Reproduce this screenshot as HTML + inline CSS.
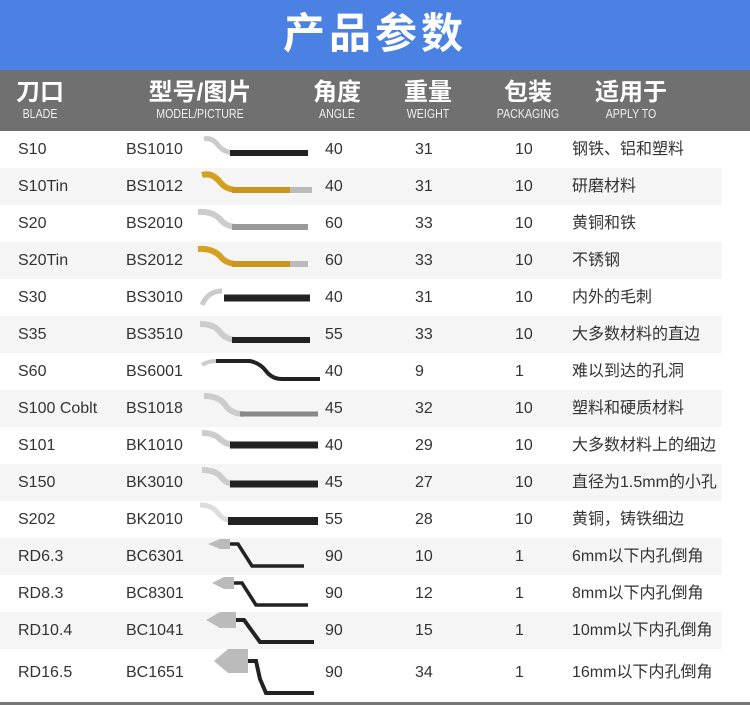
<!DOCTYPE html>
<html><head><meta charset="utf-8"><style>
*{margin:0;padding:0;box-sizing:border-box}
body{width:750px;height:705px;background:#fff;position:relative;overflow:hidden;font-family:"Liberation Sans","Noto Sans CJK SC",sans-serif;color:#333}
.top{position:absolute;left:0;top:0;width:750px;height:70px;background:#4a81e2;color:#fff;font-size:42px;font-weight:bold;text-align:center;line-height:68px;letter-spacing:4px}
.hd{position:absolute;left:0;top:70px;width:750px;height:61px;background:#707070;color:#fff}
.hd div{position:absolute;top:9px;text-align:center}
.hd b{display:block;font-size:24px;font-weight:bold;line-height:28px}
.hd i{display:block;font-style:normal;font-size:12.5px;line-height:14px;transform:scaleX(.85);color:#eee}
.r{position:absolute;left:0;width:722px;height:37px;font-size:16px}
.r.g{background:#f5f5f5}
.r span{position:absolute;top:0;height:37px;line-height:37px;white-space:nowrap}
.r svg{position:absolute;left:190px;top:0}
.bl{position:absolute;left:0;top:702px;width:750px;height:3px;background:#777}
</style></head><body>
<div class="top">产品参数</div>
<div class="hd">
<div style="left:10px;width:60px"><b>刀口</b><i>BLADE</i></div>
<div style="left:136px;width:128px"><b>型号/图片</b><i>MODEL/PICTURE</i></div>
<div style="left:304px;width:66px"><b>角度</b><i>ANGLE</i></div>
<div style="left:394px;width:68px"><b>重量</b><i>WEIGHT</i></div>
<div style="left:488px;width:80px"><b>包装</b><i>PACKAGING</i></div>
<div style="left:592px;width:78px"><b>适用于</b><i>APPLY TO</i></div>
</div>

<div class="r" style="top:131px"><span style="left:18px">S10</span><span style="left:126px">BS1010</span>
<svg width="130" height="37"><path d="M14,8 Q22,6 28,14 Q34,22 46,22" fill="none" stroke="#ccc" stroke-width="5"/><path d="M40,22 L118,22" stroke="#222" stroke-width="6"/></svg>
<span style="left:325px">40</span><span style="left:415px">31</span><span style="left:515px">10</span><span style="left:572px">钢铁、铝和塑料</span></div>

<div class="r g" style="top:168px"><span style="left:18px">S10Tin</span><span style="left:126px">BS1012</span>
<svg width="130" height="37"><path d="M12,7 Q22,4 30,14 Q36,22 48,22" fill="none" stroke="#d4a020" stroke-width="6"/><path d="M42,22 L100,22" stroke="#c8961a" stroke-width="6"/><path d="M100,22 L122,22" stroke="#bbb" stroke-width="6"/></svg>
<span style="left:325px">40</span><span style="left:415px">31</span><span style="left:515px">10</span><span style="left:572px">研磨材料</span></div>

<div class="r" style="top:205px"><span style="left:18px">S20</span><span style="left:126px">BS2010</span>
<svg width="130" height="37"><path d="M8,7 Q22,6 30,14 Q36,22 48,22" fill="none" stroke="#ccc" stroke-width="6"/><path d="M42,22 L118,22" stroke="#999" stroke-width="6"/></svg>
<span style="left:325px">60</span><span style="left:415px">33</span><span style="left:515px">10</span><span style="left:572px">黄铜和铁</span></div>

<div class="r g" style="top:242px"><span style="left:18px">S20Tin</span><span style="left:126px">BS2012</span>
<svg width="130" height="37"><path d="M8,7 Q22,6 30,14 Q36,22 48,22" fill="none" stroke="#d4a020" stroke-width="6"/><path d="M42,22 L100,22" stroke="#c8961a" stroke-width="6"/><path d="M100,22 L118,22" stroke="#bbb" stroke-width="6"/></svg>
<span style="left:325px">60</span><span style="left:415px">33</span><span style="left:515px">10</span><span style="left:572px">不锈钢</span></div>

<div class="r" style="top:279px"><span style="left:18px">S30</span><span style="left:126px">BS3010</span>
<svg width="130" height="37"><path d="M12,26 Q18,12 32,12" fill="none" stroke="#ccc" stroke-width="5"/><path d="M34,19 L120,19" stroke="#222" stroke-width="7"/></svg>
<span style="left:325px">40</span><span style="left:415px">31</span><span style="left:515px">10</span><span style="left:572px">内外的毛刺</span></div>

<div class="r g" style="top:316px"><span style="left:18px">S35</span><span style="left:126px">BS3510</span>
<svg width="130" height="37"><path d="M10,8 Q24,8 30,16 Q36,24 48,24" fill="none" stroke="#ccc" stroke-width="6"/><path d="M42,24 L120,24" stroke="#222" stroke-width="6"/></svg>
<span style="left:325px">55</span><span style="left:415px">33</span><span style="left:515px">10</span><span style="left:572px">大多数材料的直边</span></div>

<div class="r" style="top:353px"><span style="left:18px">S60</span><span style="left:126px">BS6001</span>
<svg width="130" height="37"><path d="M12,12 Q18,8 26,8" fill="none" stroke="#ccc" stroke-width="4"/><path d="M26,8 L60,8 Q70,10 76,18 Q82,26 92,26 L130,26" fill="none" stroke="#222" stroke-width="4"/></svg>
<span style="left:325px">40</span><span style="left:415px">9</span><span style="left:515px">1</span><span style="left:572px">难以到达的孔洞</span></div>

<div class="r g" style="top:390px"><span style="left:18px">S100 Coblt</span><span style="left:126px">BS1018</span>
<svg width="130" height="37"><path d="M14,6 Q30,6 36,16 Q42,24 54,24" fill="none" stroke="#ccc" stroke-width="6"/><path d="M50,24 L128,24" stroke="#888" stroke-width="5"/></svg>
<span style="left:325px">45</span><span style="left:415px">32</span><span style="left:515px">10</span><span style="left:572px">塑料和硬质材料</span></div>

<div class="r" style="top:427px"><span style="left:18px">S101</span><span style="left:126px">BK1010</span>
<svg width="130" height="37"><path d="M12,6 Q24,6 30,12 Q36,18 46,18" fill="none" stroke="#ccc" stroke-width="6"/><path d="M40,18 L128,18" stroke="#222" stroke-width="7"/></svg>
<span style="left:325px">40</span><span style="left:415px">29</span><span style="left:515px">10</span><span style="left:572px">大多数材料上的细边</span></div>

<div class="r g" style="top:464px"><span style="left:18px">S150</span><span style="left:126px">BK3010</span>
<svg width="130" height="37"><path d="M12,6 Q26,6 32,14 Q36,20 46,20" fill="none" stroke="#ccc" stroke-width="6"/><path d="M40,20 L128,20" stroke="#222" stroke-width="7"/></svg>
<span style="left:325px">45</span><span style="left:415px">27</span><span style="left:515px">10</span><span style="left:572px">直径为1.5mm的小孔</span></div>

<div class="r" style="top:501px"><span style="left:18px">S202</span><span style="left:126px">BK2010</span>
<svg width="130" height="37"><path d="M10,4 Q22,4 28,12 Q34,20 44,20" fill="none" stroke="#ddd" stroke-width="5"/><path d="M38,20 L128,20" stroke="#222" stroke-width="8"/></svg>
<span style="left:325px">55</span><span style="left:415px">28</span><span style="left:515px">10</span><span style="left:572px">黄铜，铸铁细边</span></div>

<div class="r g" style="top:538px"><span style="left:18px">RD6.3</span><span style="left:126px">BC6301</span>
<svg width="130" height="37"><path d="M18,6 L30,1 L40,1 L40,11 L30,11 Z" fill="#bbb"/><path d="M40,6 L48,6 L62,28 L114,28" fill="none" stroke="#222" stroke-width="3.5"/></svg>
<span style="left:325px">90</span><span style="left:415px">10</span><span style="left:515px">1</span><span style="left:572px">6mm以下内孔倒角</span></div>

<div class="r" style="top:575px"><span style="left:18px">RD8.3</span><span style="left:126px">BC8301</span>
<svg width="130" height="37"><path d="M22,8 L34,2 L44,2 L44,14 L34,14 Z" fill="#bbb"/><path d="M44,8 L52,8 L66,30 L118,30" fill="none" stroke="#222" stroke-width="3.5"/></svg>
<span style="left:325px">90</span><span style="left:415px">12</span><span style="left:515px">1</span><span style="left:572px">8mm以下内孔倒角</span></div>

<div class="r g" style="top:612px"><span style="left:18px">RD10.4</span><span style="left:126px">BC1041</span>
<svg width="130" height="37"><path d="M16,8 L30,0 L46,0 L46,16 L30,16 Z" fill="#bbb"/><path d="M46,8 L54,8 L70,30 L124,30" fill="none" stroke="#222" stroke-width="4"/></svg>
<span style="left:325px">90</span><span style="left:415px">15</span><span style="left:515px">1</span><span style="left:572px">10mm以下内孔倒角</span></div>

<div class="r" style="top:649px;height:53px"><span style="left:18px;height:53px;line-height:48px">RD16.5</span><span style="left:126px;height:53px;line-height:48px">BC1651</span>
<svg width="130" height="53"><path d="M24,12 L38,0 L58,0 L58,24 L38,24 Z" fill="#bbb"/><path d="M58,12 L66,12 L70,30 L76,44 L124,44" fill="none" stroke="#222" stroke-width="4"/></svg>
<span style="left:325px;height:53px;line-height:48px">90</span><span style="left:415px;height:53px;line-height:48px">34</span><span style="left:515px;height:53px;line-height:48px">1</span><span style="left:572px;height:53px;line-height:48px">16mm以下内孔倒角</span></div>

<div class="bl"></div>
</body></html>
